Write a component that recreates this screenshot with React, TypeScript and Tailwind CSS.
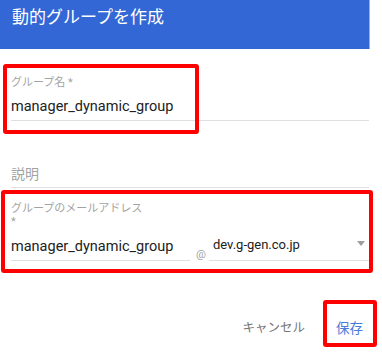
import React from "react";

// Annotated "create dynamic group" dialog. The red boxes are screenshot
// annotations drawn over the form, so they are the only absolute pieces.

const FONT = "font-['Roboto','Noto_Sans_CJK_JP',sans-serif]";

function Underline({ children, className = "" }: { children: React.ReactNode; className?: string }) {
  return <div className={`border-b border-[#e0e0e0] ${className}`}>{children}</div>;
}

export default function App() {
  return (
    <div className={`relative h-[353px] w-[382px] overflow-hidden bg-white ${FONT}`}>
      {/* Header */}
      <div className="h-[49px] w-[370px] border-r border-[#8fb0f0] bg-[#3367d6] pl-[12px] pt-[5px]">
        <h1 className="text-[17px] leading-[24px] font-normal text-white">動的グループを作成</h1>
      </div>

      <div className="w-[369px] pl-[11px]">
        {/* Group name */}
        <div className="pt-[27px]">
          <div className="text-[11px] leading-[13px] text-[#a3a3a3]">グループ名 *</div>
          <Underline className="mt-[8px] pb-[3px]">
            <div className="text-[14.5px] leading-[20px] text-[#212121]">manager_dynamic_group</div>
          </Underline>
        </div>

        {/* Description */}
        <Underline className="mt-[43px] pb-[3px]">
          <div className="text-[14px] leading-[20px] text-[#a3a3a3]">説明</div>
        </Underline>

        {/* Email */}
        <div className="pt-[14px]">
          <div className="text-[11px] leading-[13px] text-[#a3a3a3]">
            グループのメールアドレス
            <br />*
          </div>
          <div className="mt-[7px] flex items-end">
            <Underline className="w-[179px] pb-[3px]">
              <div className="text-[14.5px] leading-[20px] text-[#212121]">manager_dynamic_group</div>
            </Underline>
            <span className="ml-[6px] mr-[3px] text-[11px] leading-[13px] text-[#a3a3a3]">@</span>
            <Underline className="flex flex-1 items-start justify-between pb-[6px] pl-[4px] pr-[4px]">
              <span className="text-[13px] leading-[19px] font-normal text-[#212121]">dev.g-gen.co.jp</span>
              <svg width="8" height="5" viewBox="0 0 8 5" className="mt-[6px]">
                <path d="M0 0h8L4 5z" fill="#9e9e9e" />
              </svg>
            </Underline>
          </div>
        </div>

        {/* Actions */}
        <div className="mt-[58px] flex items-center justify-end gap-[31px] pr-[6px]">
          <button className="text-[12.5px] leading-[18px] text-[#757575]">キャンセル</button>
          <button className="text-[13.5px] leading-[18px] text-[#4a7bd9]">保存</button>
        </div>
      </div>

      {/* Annotation boxes */}
      <div className="absolute left-[3px] top-[64px] h-[70px] w-[196px] rounded-[3px] border-4 border-[#ff0000]" />
      <div className="absolute left-[1px] top-[190px] h-[83px] w-[372px] rounded-[3px] border-4 border-[#ff0000]" />
      <div className="absolute left-[323px] top-[300px] h-[47px] w-[54px] rounded-[3px] border-4 border-[#ff0000]" />
    </div>
  );
}
